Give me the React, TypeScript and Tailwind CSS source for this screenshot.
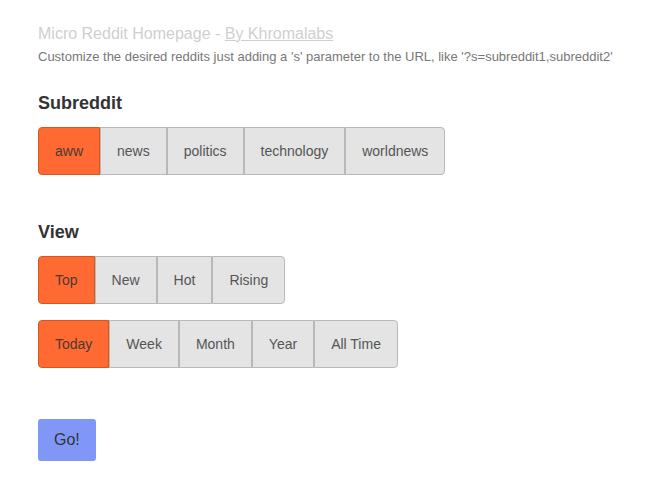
import { useState } from "react";

const subreddits = ["aww", "news", "politics", "technology", "worldnews"];
const sorts = ["Top", "New", "Hot", "Rising"];
const periods = ["Today", "Week", "Month", "Year", "All Time"];

function ButtonGroup({
  items,
  value,
  onChange,
}: {
  items: string[];
  value: string;
  onChange: (v: string) => void;
}) {
  return (
    <div className="flex">
      {items.map((item, i) => {
        const active = item === value;
        return (
          <button
            key={item}
            onClick={() => onChange(item)}
            className={
              "h-[48px] px-4 text-[14px] border " +
              (i === 0 ? "rounded-l-[4px] " : "") +
              (i === items.length - 1 ? "rounded-r-[4px] " : "") +
              (active
                ? "bg-[#ff6a33] border-[#d95520] text-[#4a3a33]"
                : "bg-[#e4e4e4] border-[#b9b9b9] text-[#555]")
            }
          >
            {item}
          </button>
        );
      })}
    </div>
  );
}

export default function App() {
  const [sub, setSub] = useState("aww");
  const [sort, setSort] = useState("Top");
  const [period, setPeriod] = useState("Today");

  return (
    <div className="min-h-screen bg-white pl-[38px] pt-[24px] font-['Liberation_Sans',Arial,sans-serif]">
      {/* Header */}
      <h1 className="text-[16px] leading-[20px] text-[#cfcfcf]">
        Micro Reddit Homepage -{" "}
        <a href="#" className="underline">
          By Khromalabs
        </a>
      </h1>
      <p className="mt-[5px] text-[13px] leading-[16px] text-[#777]">
        Customize the desired reddits just adding a 's' parameter to the URL, like '?s=subreddit1,subreddit2'
      </p>

      {/* Subreddit */}
      <h2 className="mt-[27px] text-[18px] leading-[22px] font-bold text-[#333]">Subreddit</h2>
      <div className="mt-[13px]">
        <ButtonGroup items={subreddits} value={sub} onChange={setSub} />
      </div>

      {/* View */}
      <h2 className="mt-[46px] text-[18px] leading-[22px] font-bold text-[#333]">View</h2>
      <div className="mt-[13px]">
        <ButtonGroup items={sorts} value={sort} onChange={setSort} />
      </div>
      <div className="mt-[16px]">
        <ButtonGroup items={periods} value={period} onChange={setPeriod} />
      </div>

      <button className="mt-[51px] h-[42px] px-4 rounded-[3px] bg-[#8097f8] text-[16px] text-[#333]">
        Go!
      </button>
    </div>
  );
}
